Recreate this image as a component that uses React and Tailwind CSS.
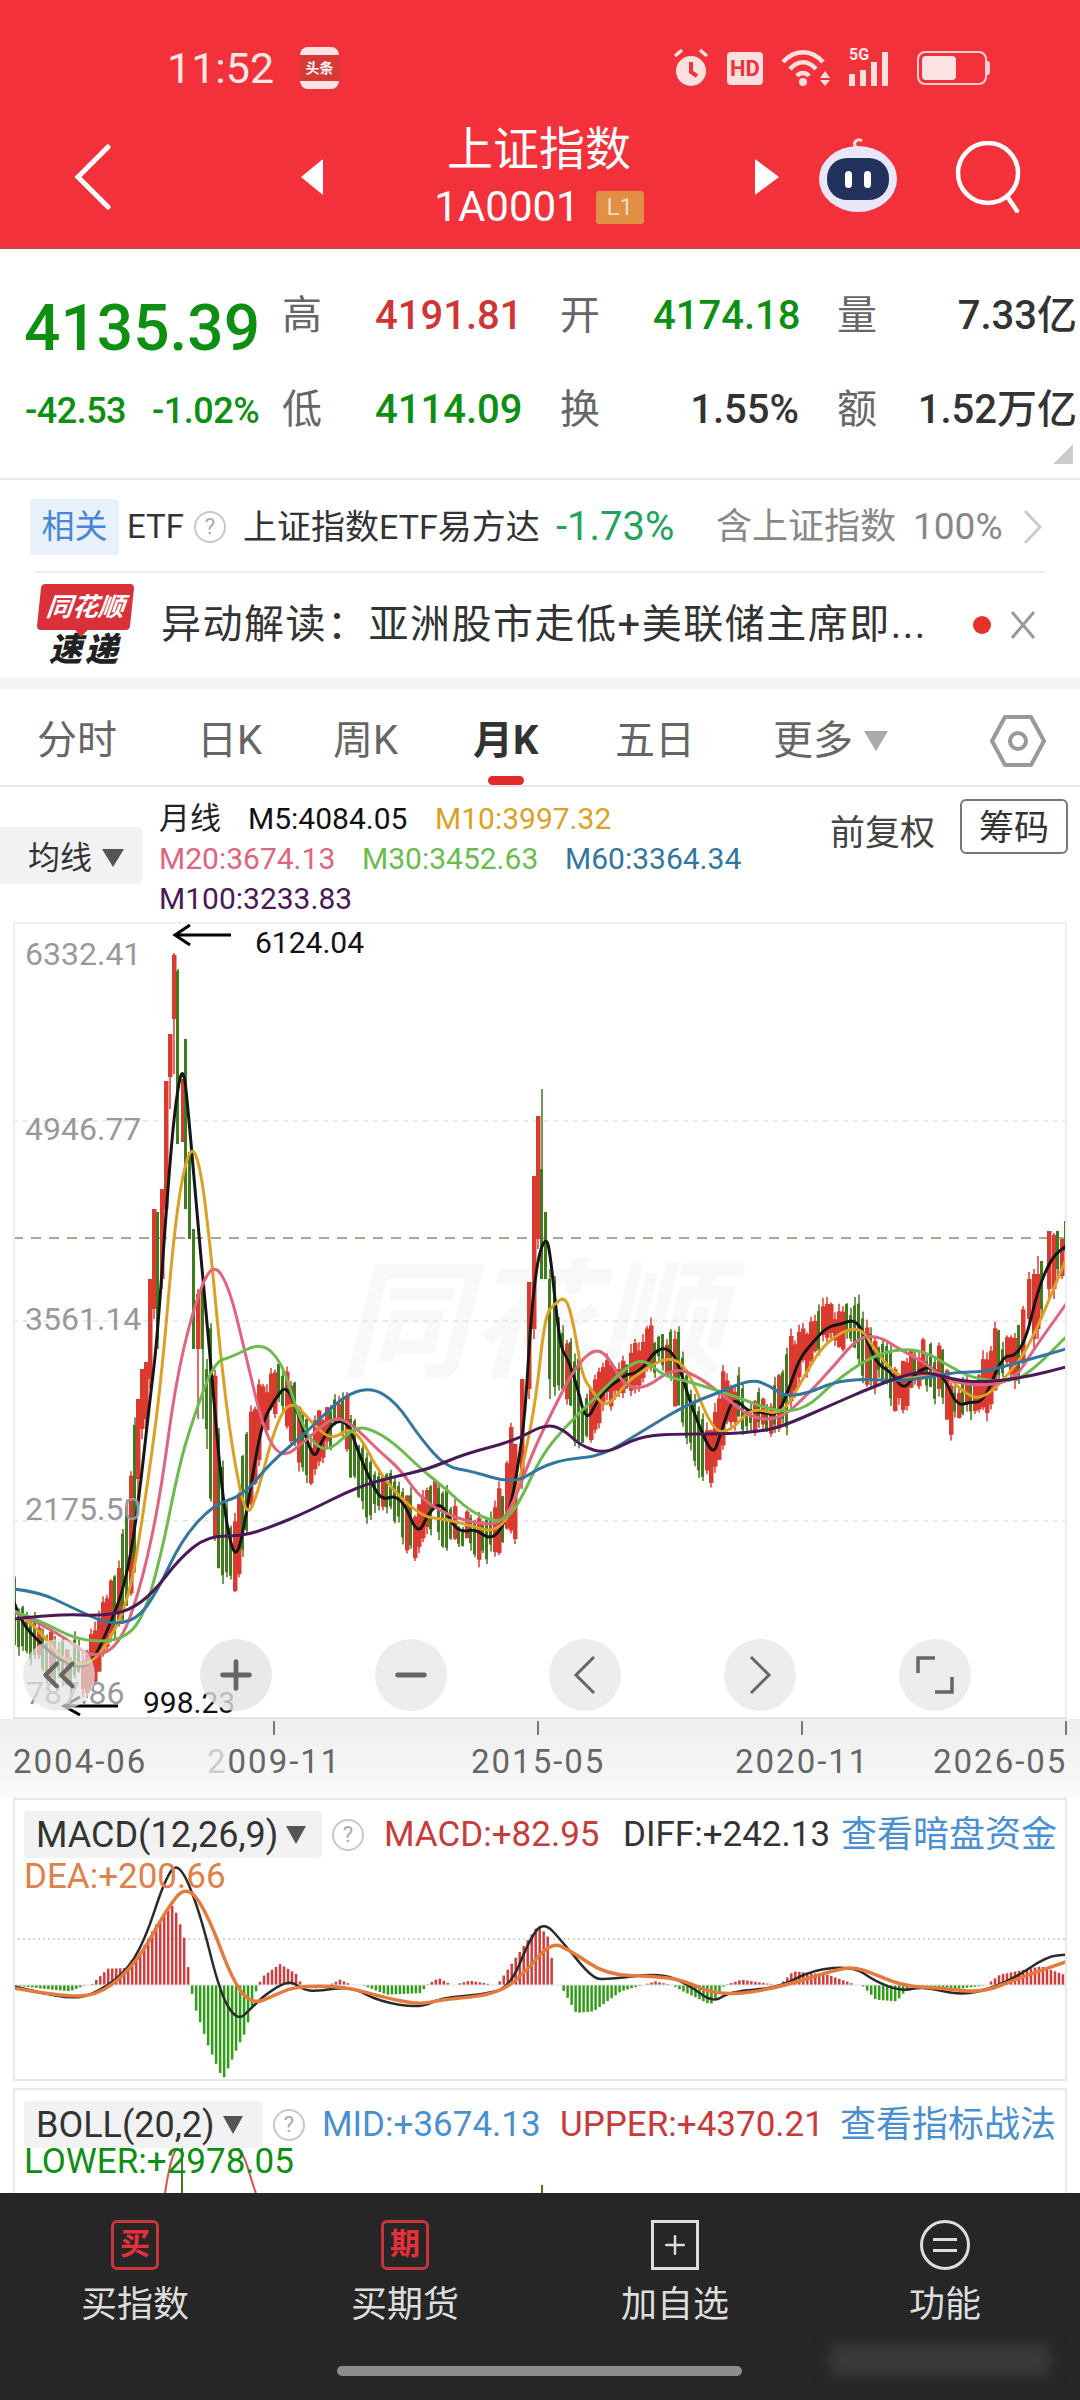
import React from 'react';
import { ChevronsLeft, Plus, Minus } from 'lucide-react';

const RED = '#dd3a2f';
const GREEN = '#3f7a1f';

const M5 = [[14,1603],[21,1623],[39,1643],[61,1663],[89,1670],[107,1633],[125,1587],[137,1517],[150,1400],[157,1343],[168,1187],[175,1107],[183,1062],[189,1120],[196,1203],[205,1303],[214,1400],[221,1483],[229,1540],[237,1560],[246,1517],[257,1450],[264,1420],[275,1400],[287,1385],[300,1420],[314,1462],[321,1443],[334,1422],[348,1423],[357,1450],[371,1483],[379,1497],[386,1500],[393,1497],[404,1503],[418,1537],[429,1513],[441,1503],[454,1528],[464,1533],[475,1530],[489,1540],[500,1533],[511,1507],[518,1467],[525,1417],[531,1317],[538,1257],[546,1238],[550,1253],[556,1310],[561,1350],[568,1360],[577,1387],[586,1423],[597,1403],[606,1390],[616,1383],[627,1375],[634,1375],[645,1367],[654,1353],[666,1348],[677,1360],[688,1397],[699,1427],[713,1457],[720,1437],[731,1403],[738,1402],[749,1413],[763,1413],[777,1417],[788,1393],[799,1360],[813,1343],[827,1328],[841,1325],[856,1320],[868,1343],[877,1365],[891,1373],[904,1392],[916,1373],[931,1367],[945,1380],[957,1407],[970,1403],[984,1403],[1002,1357],[1016,1357],[1027,1337],[1038,1290],[1052,1258],[1066,1247]];
const M10 = [[14,1612],[36,1627],[61,1660],[86,1668],[107,1647],[129,1600],[143,1517],[161,1387],[175,1220],[189,1145],[200,1163],[211,1253],[220,1353],[232,1450],[246,1520],[257,1497],[275,1427],[291,1400],[311,1423],[332,1442],[354,1425],[382,1480],[421,1518],[446,1520],[475,1528],[493,1533],[511,1517],[525,1457],[536,1400],[545,1317],[554,1305],[566,1297],[574,1327],[582,1377],[593,1393],[606,1410],[627,1383],[645,1370],[670,1357],[688,1370],[713,1433],[731,1432],[752,1408],[781,1417],[799,1387],[824,1343],[859,1325],[874,1350],[899,1380],[924,1378],[945,1373],[959,1390],[982,1403],[1016,1367],[1034,1337],[1066,1260]];
const M20 = [[14,1613],[36,1623],[64,1638],[93,1660],[121,1645],[143,1580],[161,1493],[175,1387],[193,1310],[212,1262],[229,1287],[246,1357],[264,1433],[282,1460],[304,1443],[332,1418],[350,1423],[379,1452],[400,1470],[421,1500],[450,1517],[479,1525],[500,1525],[514,1503],[534,1450],[552,1413],[574,1370],[593,1350],[607,1355],[624,1387],[645,1390],[674,1368],[699,1378],[724,1397],[752,1420],[781,1420],[806,1397],[834,1367],[859,1337],[881,1338],[899,1350],[924,1363],[945,1380],[974,1387],[1013,1383],[1034,1350],[1066,1305]];
const M30 = [[14,1612],[43,1623],[79,1642],[121,1642],[143,1620],[161,1557],[179,1467],[193,1420],[214,1363],[232,1358],[261,1343],[282,1363],[296,1410],[311,1443],[329,1453],[354,1428],[371,1430],[393,1443],[421,1470],[446,1490],[471,1513],[500,1525],[518,1507],[541,1457],[566,1427],[591,1403],[627,1367],[645,1360],[663,1377],[691,1383],[734,1397],[777,1413],[806,1410],[834,1383],[870,1358],[899,1350],[924,1352],[949,1367],[974,1380],[1013,1383],[1034,1370],[1066,1338]];
const M60 = [[14,1590],[39,1593],[71,1608],[107,1625],[136,1622],[157,1593],[182,1540],[214,1505],[243,1497],[271,1463],[307,1433],[343,1397],[371,1388],[396,1403],[421,1440],[446,1468],[471,1472],[514,1485],[541,1468],[566,1460],[602,1457],[641,1433],[684,1407],[720,1393],[752,1380],[770,1387],[784,1397],[806,1395],[834,1383],[863,1380],[899,1382],[931,1378],[956,1373],[984,1373],[1020,1363],[1066,1350]];
const M100 = [[14,1620],[61,1615],[100,1617],[129,1612],[154,1593],[179,1560],[207,1537],[243,1537],[271,1528],[307,1513],[357,1488],[393,1478],[429,1470],[464,1455],[514,1442],[545,1425],[563,1430],[581,1447],[606,1455],[638,1438],[670,1435],[720,1435],[756,1433],[781,1428],[827,1408],[863,1392],[899,1378],[924,1372],[959,1382],[988,1383],[1027,1378],[1066,1368]];

const DIFF = [[20,625],[60,645],[100,660],[130,655],[180,590],[210,490],[240,300],[260,250],[290,400],[320,650],[345,730],[365,690],[385,650],[420,605],[440,635],[460,640],[510,625],[550,670],[610,690],[640,660],[700,650],[740,630],[770,480],[790,430],[820,500],[860,600],[880,605],[960,585],[1000,620],[1035,675],[1060,640],[1130,630],[1180,575],[1240,565],[1270,610],[1310,640],[1340,625],[1390,650],[1425,640],[1470,605],[1520,535],[1550,530]];
const DEA = [[20,630],[100,660],[150,645],[200,550],[240,400],[270,320],[300,400],[340,620],[368,680],[400,650],[430,625],[500,625],[560,660],[610,680],[640,665],[720,650],[760,590],[800,490],[830,520],[880,590],[950,595],[990,605],[1045,655],[1130,630],[1220,570],[1250,570],[1310,625],[1370,630],[1425,645],[1480,600],[1550,550]];
const HIST = [[20,622],[60,632],[100,640],[122,622],[130,622],[155,572],[185,570],[200,530],[225,440],[250,380],[265,470],[275,622],[280,680],[300,800],[322,905],[345,800],[355,760],[370,640],[373,622],[380,595],[405,558],[430,590],[436,622],[455,632],[475,622],[492,605],[510,622],[525,622],[560,650],[610,645],[617,622],[635,600],[655,622],[680,608],[720,622],[750,530],[780,440],[795,480],[805,622],[812,622],[835,705],[860,700],[900,640],[930,622],[950,610],[975,622],[990,640],[1030,680],[1050,622],[1075,605],[1130,622],[1150,580],[1200,590],[1240,620],[1250,622],[1270,665],[1300,670],[1320,622],[1380,635],[1430,622],[1450,590],[1510,565],[1550,595]];

// hand read candles around the two spikes and the right edge: x, top, bottom, wickTop, wickBottom
const SPIKE_CANDLES = [
  [138,1400,1480,1400,1500,RED],[142,1370,1430,1370,1440,RED],[146,1363,1420,1363,1430,RED],[150,1280,1380,1280,1390,RED],
  [154,1210,1310,1210,1320,RED],[158,1213,1340,1213,1350,GREEN],[162,1190,1280,1190,1290,RED],[166,1082,1210,1082,1220,RED],
  [170,1035,1078,1035,1110,RED],[174,956,1020,954,1075,RED],[178,972,1145,970,1145,GREEN],[183,1080,1143,1080,1143,RED],
  [186,1040,1210,1040,1210,GREEN],[190,1153,1240,1153,1240,GREEN],[194,1230,1350,1230,1350,GREEN],[198,1295,1350,1290,1420,RED],
  [203,1287,1350,1287,1420,GREEN],[207,1370,1430,1360,1450,GREEN],
  [515,1445,1540,1445,1545,RED],[522,1380,1480,1380,1490,RED],[529,1283,1390,1283,1400,RED],[534,1177,1330,1177,1340,RED],
  [538,1117,1240,1117,1250,RED],[542,1170,1280,1090,1280,GREEN],[546,1213,1280,1213,1280,GREEN],[550,1280,1380,1270,1400,GREEN],
  [1029,1280,1320,1273,1330,RED],[1034,1275,1340,1270,1350,RED],[1038,1275,1330,1257,1340,RED],[1042,1262,1310,1262,1320,GREEN],
  [1049,1232,1290,1232,1300,RED],[1054,1236,1290,1234,1300,RED],[1058,1232,1270,1232,1280,GREEN],[1062,1240,1277,1240,1280,RED],
  [1066,1222,1252,1222,1252,GREEN],
];

const lerp = (pts, x) => {
  if (x <= pts[0][0]) return pts[0][1];
  for (let i = 1; i < pts.length; i++) {
    if (x <= pts[i][0]) {
      const [x0, y0] = pts[i - 1];
      const [x1, y1] = pts[i];
      return y0 + ((y1 - y0) * (x - x0)) / (x1 - x0);
    }
  }
  return pts[pts.length - 1][1];
};

const noise = (i) => {
  const v = Math.sin(i * 12.9898) * 43758.5453;
  return v - Math.floor(v);
};

const smooth = (pts) => {
  let d = `M${pts[0][0]} ${pts[0][1]}`;
  for (let i = 1; i < pts.length - 1; i++) {
    const mx = (pts[i][0] + pts[i + 1][0]) / 2;
    const my = (pts[i][1] + pts[i + 1][1]) / 2;
    d += ` Q${pts[i][0]} ${pts[i][1]} ${mx} ${my}`;
  }
  const last = pts[pts.length - 1];
  return `${d} L${last[0]} ${last[1]}`;
};

const buildCandles = () => {
  const out = [];
  let i = 0;
  for (let x = 15; x <= 1064; x += 4) {
    i++;
    const inSpike = (x >= 136 && x <= 209) || (x >= 513 && x <= 552) || x >= 1027;
    if (inSpike) continue;
    const c = lerp(M5, x + 4);
    const slope = lerp(M5, x + 7) - lerp(M5, x + 1);
    const h = 6 + Math.abs(slope) * 1.1 + noise(i) * 11;
    const mid = c + (noise(i + 300) - 0.55) * 20;
    const up = noise(i + 600) < (slope < 0 ? 0.8 : 0.28);
    out.push([x, mid - h, mid + h, mid - h - noise(i + 900) * 9, mid + h + noise(i + 1200) * 9, up ? RED : GREEN]);
  }
  return out.concat(SPIKE_CANDLES);
};

const CANDLES = buildCandles();

const buildBars = () => {
  const bars = [];
  for (let zx = 22; zx <= 1550; zx += 5.8) {
    const y = 1780 + lerp(HIST, zx) / 3;
    const x = zx / 1.452;
    if (Math.abs(y - 1987) < 0.6) continue;
    bars.push({ x, y: Math.min(y, 1987), h: Math.abs(y - 1987), up: y < 1987 });
  }
  return bars;
};

const scaleMacd = (pts) => pts.map(([x, y]) => [x / 1.452, 1780 + y / 3]);

const Line = ({ pts, color, width = 3 }) => (
  <path d={smooth(pts)} fill="none" stroke={color} strokeWidth={width} strokeLinejoin="round" strokeLinecap="round" />
);

const StatusBar = () => (
  <div className="flex items-center h-[68px] mt-[34px] pl-[167px] pr-[90px] text-[#fbe6e6]">
    <span className="text-[43px] leading-none w-[133px]">11:52</span>
    <div className="w-[39px] h-[42px] rounded-[8px] bg-[#fde4e2] flex items-center justify-center overflow-hidden relative">
      <div className="w-full h-[26px] bg-[#d63a36] text-[#fff] text-[14px] leading-[26px] text-center font-bold">头条</div>
    </div>
    <div className="flex-1" />
    <svg width="36" height="42" viewBox="0 0 36 42" className="mr-[18px]">
      <circle cx="18" cy="24" r="15" fill="#fbe0e0" />
      <path d="M18 15v10l6 4" stroke="#f2313b" strokeWidth="4" fill="none" />
      <path d="M2 9l7-6M34 9l-7-6" stroke="#fbe0e0" strokeWidth="3.5" />
    </svg>
    <div className="w-[36px] h-[33px] rounded-[4px] bg-[#fbe0e0] text-[#f2313b] text-[22px] leading-[33px] text-center font-bold mr-[18px]">HD</div>
    <svg width="52" height="38" viewBox="0 0 52 38" className="mr-[16px]">
      <path d="M2 13C14 0 30 0 42 13M9 20C17 11 27 11 35 20M16 27C19 23 25 23 28 27" stroke="#fbe0e0" strokeWidth="4.5" fill="none" />
      <circle cx="22" cy="33" r="4" fill="#fbe0e0" />
      <path d="M44 22l5 7h-10zM44 37l5-6h-10z" fill="#fbe0e0" />
    </svg>
    <div className="relative w-[52px] h-[36px] mr-[16px]">
      <span className="absolute -top-[3px] left-0 text-[16px] leading-none font-bold">5G</span>
      <div className="absolute bottom-0 left-0 flex items-end gap-[5px]">
        <div className="w-[6px] h-[12px] bg-[#fbe0e0]" />
        <div className="w-[6px] h-[16px] bg-[#fbe0e0]" />
        <div className="w-[6px] h-[24px] bg-[#fbe0e0]" />
        <div className="w-[6px] h-[34px] bg-[#fbe0e0]" />
      </div>
    </div>
    <div className="flex items-center">
      <div className="w-[70px] h-[34px] rounded-[8px] border-2 border-[#fbd0d0] p-[3px]">
        <div className="w-[34px] h-full rounded-[4px] bg-[#fde4e2]" />
      </div>
      <div className="w-[3px] h-[14px] bg-[#fbd0d0] rounded-r" />
    </div>
  </div>
);

const NavBar = () => (
  <div className="flex items-center h-[135px] mt-[7px] relative">
    <svg width="40" height="66" viewBox="0 0 40 66" className="ml-[73px]">
      <path d="M35 3L5 33l30 30" fill="none" stroke="#fff" strokeWidth="5" strokeLinecap="round" />
    </svg>
    <div className="ml-[188px] w-0 h-0 border-y-[18px] border-y-transparent border-r-[22px] border-r-white" />
    <div className="w-[432px] flex flex-col items-center text-white">
      <div className="text-[46px] leading-[56px] -mt-[5px]">上证指数</div>
      <div className="flex items-center gap-[16px] leading-none mt-[10px]">
        <span className="text-[42px] leading-[40px]">1A0001</span>
        <span className="w-[48px] h-[33px] rounded-[3px] bg-[#e08f45] text-[#f7dcc0] text-[24px] leading-[33px] text-center">L1</span>
      </div>
    </div>
    <div className="w-0 h-0 border-y-[18px] border-y-transparent border-l-[24px] border-l-white" />
    <svg width="84" height="80" viewBox="0 0 84 80" className="ml-[37px]">
      <path d="M40 10c-4-5 2-9 6-6" fill="none" stroke="#fbe0e0" strokeWidth="3" />
      <ellipse cx="42" cy="42" rx="39" ry="33" fill="#e9e6f8" />
      <rect x="11" y="21" width="62" height="42" rx="20" fill="#23325c" />
      <rect x="29" y="34" width="7" height="17" rx="3.5" fill="#fff" />
      <rect x="48" y="34" width="7" height="17" rx="3.5" fill="#fff" />
    </svg>
    <svg width="72" height="72" viewBox="0 0 72 72" className="ml-[54px]">
      <circle cx="34" cy="32" r="30" fill="none" stroke="#fff" strokeWidth="4.5" />
      <path d="M53 55l10 15" stroke="#fff" strokeWidth="4.5" strokeLinecap="round" />
    </svg>
  </div>
);

const Cell = ({ label, value, color, right, w, lw = 'w-[93px]' }) => (
  <>
    <span className={`${lw} shrink-0 text-[40px] text-[#666] leading-none`}>{label}</span>
    <span className={`${w} shrink-0 text-[40px] font-medium leading-none whitespace-nowrap ${right ? 'text-right' : ''}`} style={{ color }}>{value}</span>
  </>
);

const Quote = () => (
  <div className="relative h-[231px] border-b-2 border-[#e8e8e8] pt-[24px] flex">
    <div className="w-[282px] shrink-0">
      <div className="h-[108px] pl-[24px] pt-[18px] text-[64px] leading-[76px] font-medium text-[#0d8f12]">4135.39</div>
      <div className="flex items-center h-[60px] pl-[25px] gap-[26px] text-[36px] text-[#0d8f12] font-medium whitespace-nowrap tracking-[-0.5px]">
        <span>-42.53</span>
        <span>-1.02%</span>
      </div>
    </div>
    <div className="flex-1 flex flex-col gap-[14px] pt-[3px]">
      <div className="flex items-center h-[80px]">
        <Cell label="高" value="4191.81" color="#cf3535" w="w-[185px]" />
        <Cell label="开" value="4174.18" color="#0d8f12" w="w-[146px]" />
        <span className="w-[38px]" />
        <Cell label="量" value="7.33亿" color="#333" right lw="w-[60px]" w="w-[180px]" />
      </div>
      <div className="flex items-center h-[80px]">
        <Cell label="低" value="4114.09" color="#0d8f12" w="w-[185px]" />
        <Cell label="换" value="1.55%" color="#333" right w="w-[146px]" />
        <span className="w-[38px]" />
        <Cell label="额" value="1.52万亿" color="#333" right lw="w-[60px]" w="w-[180px]" />
      </div>
    </div>
    <div className="absolute right-[7px] bottom-[14px] w-0 h-0 border-b-[20px] border-b-[#ccc] border-l-[20px] border-l-transparent" />
  </div>
);

const QuestionDot = ({ className }) => (
  <span className={`${className} shrink-0 w-[32px] h-[32px] rounded-full border-2 border-[#c8c8c8] text-[#aaa] text-[22px] leading-[28px] text-center`}>?</span>
);

const EtfRow = () => (
  <div className="h-[91px] flex items-center pl-[30px] pt-[3px] whitespace-nowrap">
    <span className="w-[89px] h-[56px] rounded-[4px] bg-[#e8f0fb] text-[#4a86d8] text-[33px] leading-[56px] text-center">相关</span>
    <span className="ml-[8px] text-[33px] text-[#333]">ETF</span>
    <QuestionDot className="ml-[10px]" />
    <span className="ml-[17px] text-[34px] text-[#333] w-[313px]">上证指数ETF易方达</span>
    <span className="text-[40px] text-[#22a45d] w-[160px]">-1.73%</span>
    <span className="text-[36px] text-[#888] w-[197px]">含上证指数</span>
    <span className="text-[37px] text-[#888] w-[110px]">100%</span>
    <svg width="20" height="36" viewBox="0 0 20 36">
      <path d="M2 2l15 16L2 34" fill="none" stroke="#ccc" strokeWidth="3" />
    </svg>
  </div>
);

const NewsRow = () => (
  <div className="mx-[35px] h-[106px] border-t-2 border-[#eee] flex items-center">
    <div className="w-[100px] shrink-0 flex flex-col items-center">
      <div className="relative w-[93px] h-[46px] rounded-[4px] bg-[#d9303a] -skew-x-6 text-white text-[26px] leading-[46px] text-center font-bold italic">
        同花顺
        <div className="absolute left-[38px] -bottom-[7px] w-0 h-0 border-x-[7px] border-x-transparent border-t-[8px] border-t-[#d9303a]" />
      </div>
      <div className="text-[33px] leading-[34px] font-black italic text-[#222] mt-[3px] tracking-[3px]">速递</div>
    </div>
    <div className="ml-[26px] w-[772px] shrink-0 text-[40px] text-[#333] whitespace-nowrap overflow-hidden tracking-[1.5px]">异动解读：亚洲股市走低+美联储主席即...</div>
    <div className="ml-[40px] w-[18px] h-[18px] rounded-full bg-[#e5302c]" />
    <svg width="26" height="30" viewBox="0 0 26 30" className="ml-[19px]">
      <path d="M2 2l22 26M24 2L2 28" stroke="#999" strokeWidth="3" />
    </svg>
  </div>
);

const Tabs = () => (
  <div className="relative h-[98px] border-b-2 border-[#e6e6e6] pt-[7px] text-[40px] text-[#666] leading-none whitespace-nowrap flex items-center">
    <span className="ml-[37px] w-[160px]">分时</span>
    <span className="w-[136px]">日K</span>
    <span className="w-[140px]">周K</span>
    <span className="w-[142px] font-bold text-[#333]">月K</span>
    <span className="w-[158px]">五日</span>
    <span className="w-[91px]">更多</span>
    <div className="w-0 h-0 border-x-[12px] border-x-transparent border-t-[20px] border-t-[#aaa]" />
    <svg width="56" height="54" viewBox="0 0 56 54" className="ml-[102px]">
      <path d="M15 3h26l13 24-13 24H15L2 27z" fill="none" stroke="#999" strokeWidth="4" strokeLinejoin="round" />
      <circle cx="28" cy="27" r="8" fill="none" stroke="#999" strokeWidth="4" />
    </svg>
    <div className="absolute left-[488px] bottom-0 w-[36px] h-[9px] rounded-full bg-[#e22c2c]" />
  </div>
);

const Legend = () => (
  <div className="relative h-[135px] flex text-[30px] leading-[40px] whitespace-nowrap">
    <div className="w-[143px] h-[57px] mt-[40px] bg-[#f2f2f2] rounded-r-[6px] flex items-center pl-[28px] pt-[4px] text-[32px] text-[#333]">
      均线
      <div className="ml-[10px] w-0 h-0 border-x-[11px] border-x-transparent border-t-[18px] border-t-[#555]" />
    </div>
    <div className="ml-[16px] pt-[12px]">
      <div className="flex">
        <span className="text-[31px] text-[#222] w-[89px]">月线</span>
        <span className="text-[#111] w-[187px]">M5:4084.05</span>
        <span className="text-[#dca124]">M10:3997.32</span>
      </div>
      <div className="flex">
        <span className="text-[#e0647e] w-[203px]">M20:3674.13</span>
        <span className="text-[#6cbb4e] w-[203px]">M30:3452.63</span>
        <span className="text-[#33769f]">M60:3364.34</span>
      </div>
      <div className="text-[#4b1859]">M100:3233.83</div>
    </div>
    <span className="absolute left-[830px] top-[27px] text-[35px] leading-[40px] text-[#444]">前复权</span>
    <span className="absolute left-[960px] top-[12px] w-[108px] h-[55px] rounded-[6px] border-2 border-[#777] text-[35px] leading-[55px] text-center text-[#333]">筹码</span>
  </div>
);

const AXIS = [
  ['6332.41', 955, 25],
  ['4946.77', 1130, 25],
  ['3561.14', 1320, 25],
  ['2175.50', 1510, 25],
  ['787.86', 1694, 26],
];

const Circle = ({ left, tint, children }) => (
  <div className={`absolute top-[715px] w-[72px] h-[72px] rounded-full flex items-center justify-center text-[#666] ${tint}`} style={{ left }}>
    {children}
  </div>
);

const KChart = () => (
  <div className="relative ml-[13px] w-[1054px] h-[797px] border-2 border-[#eee] border-b-[#e4e4e4] overflow-hidden">
    <div className="absolute left-[325px] top-[335px] text-[128px] leading-none font-bold italic text-[#f8f8f8] whitespace-nowrap">同花顺</div>
    <svg className="absolute -left-[2px] -top-[2px]" width="1054" height="797" viewBox="13 923 1054 797">
      <path d="M13 1122H1067M13 1322H1067M13 1522H1067" stroke="#e4e4e4" strokeWidth="1.5" strokeDasharray="5 5" />
      <path d="M13 1239H1067" stroke="#b5a68e" strokeWidth="2" strokeDasharray="10 8" />
      {CANDLES.map(([x, t, b, wt, wb, color], i) => (
        <g key={i}>
          <rect x={x - 0.75} y={wt} width="1.5" height={wb - wt} fill={color} />
          <rect x={x - 2} y={t} width={color === RED ? 4.5 : 3} height={b - t} fill={color} />
        </g>
      ))}
      <Line pts={M5} color="#161616" />
      <Line pts={M10} color="#dca124" />
      <Line pts={M20} color="#e0647e" />
      <Line pts={M30} color="#6cbb4e" />
      <Line pts={M60} color="#33769f" />
      <Line pts={M100} color="#4b1859" />
      <path d="M231 936H175M190 926l-15 10 15 10" fill="none" stroke="#000" strokeWidth="3" />
      <path d="M118 1707H64M80 1698l-16 9 16 9" fill="none" stroke="#000" strokeWidth="3" />
    </svg>
    {AXIS.map(([label, y, x]) => (
      <span key={label} className="absolute text-[32px] leading-[40px] text-[#999]" style={{ left: x - 15, top: y - 945 }}>
        {label}
      </span>
    ))}
    <span className="absolute left-[240px] top-[1px] text-[30px] leading-[36px] text-[#111]">6124.04</span>
    <span className="absolute left-[128px] top-[761px] text-[30px] leading-[36px] text-[#111]">998.23</span>
    <Circle left={8} tint="bg-[#e2e2e2]/70"><ChevronsLeft size={54} strokeWidth={2} /></Circle>
    <Circle left={185} tint="bg-[#e4e4e4]/80"><Plus size={46} strokeWidth={2.5} /></Circle>
    <Circle left={360} tint="bg-[#ededed]"><Minus size={46} strokeWidth={2.5} /></Circle>
    <Circle left={534} tint="bg-[#ededed]">
      <svg width="24" height="40" viewBox="0 0 24 40">
        <path d="M21 2L3 20l18 18" fill="none" stroke="#666" strokeWidth="3" />
      </svg>
    </Circle>
    <Circle left={709} tint="bg-[#ededed]">
      <svg width="24" height="40" viewBox="0 0 24 40">
        <path d="M3 2l18 18L3 38" fill="none" stroke="#666" strokeWidth="3" />
      </svg>
    </Circle>
    <Circle left={884} tint="bg-[#ededed]">
      <svg width="40" height="40" viewBox="0 0 40 40">
        <path d="M3 18V3h17M37 22v15H20" fill="none" stroke="#666" strokeWidth="3.5" />
      </svg>
    </Circle>
  </div>
);

const DateAxis = () => (
  <div className="relative h-[79px] bg-linear-to-b from-[#eeeeee] to-[#fafafa] text-[33px] tracking-[2px] leading-none text-[#666] whitespace-nowrap">
    <span className="absolute left-[13px] top-[26px]">2004-06</span>
    <span className="absolute left-[207px] top-[26px]"><span className="text-[#ccc]">2</span>009-11</span>
    <span className="absolute left-[471px] top-[26px]">2015-05</span>
    <span className="absolute left-[735px] top-[26px]">2020-11</span>
    <span className="absolute left-[933px] top-[26px]">2026-05</span>
    <div className="absolute left-[273px] top-[2px] w-[2px] h-[14px] bg-[#777]" />
    <div className="absolute left-[537px] top-[2px] w-[2px] h-[14px] bg-[#777]" />
    <div className="absolute left-[801px] top-[2px] w-[2px] h-[14px] bg-[#777]" />
    <div className="absolute left-[1065px] top-[2px] w-[2px] h-[14px] bg-[#777]" />
  </div>
);

const Macd = () => (
  <div className="relative ml-[13px] w-[1054px] h-[283px] border-2 border-[#e8e8e8] overflow-hidden">
    <svg className="absolute -left-[2px] -top-[2px]" width="1054" height="283" viewBox="13 1800 1054 283">
      <path d="M13 1941H1067" stroke="#ccc" strokeWidth="1.5" strokeDasharray="2 3" />
      {buildBars().map((b, i) => (
        <rect key={i} x={b.x} y={b.y} width="2.5" height={b.h} fill={b.up ? '#d13b3b' : '#2e9e14'} />
      ))}
      <path d="M13 1987H1067" stroke="#ddd" strokeWidth="1" />
      <Line pts={scaleMacd(DIFF)} color="#2b2b2b" width={2.5} />
      <Line pts={scaleMacd(DEA)} color="#e57a3c" width={3.5} />
    </svg>
    <div className="relative flex items-center h-[47px] mt-[11px] text-[35px] leading-none whitespace-nowrap">
      <div className="ml-[9px] w-[298px] h-[47px] rounded-[4px] bg-[#f2f2f2] flex items-center pl-[12px] text-[36px] text-[#333]">
        MACD(12,26,9)
        <div className="ml-[8px] w-0 h-0 border-x-[10px] border-x-transparent border-t-[18px] border-t-[#555]" />
      </div>
      <QuestionDot className="ml-[10px]" />
      <span className="ml-[20px] text-[#c93a3a] w-[239px]">MACD:+82.95</span>
      <span className="text-[#333] w-[218px]">DIFF:+242.13</span>
      <span className="text-[36px] text-[#4a90d0]">查看暗盘资金</span>
    </div>
    <div className="relative ml-[9px] text-[35px] leading-[38px] text-[#e0804a]">DEA:+200.66</div>
  </div>
);

const Boll = () => (
  <div className="relative ml-[13px] mt-[7px] w-[1054px] h-[105px] border-t-2 border-x-2 border-[#e8e8e8] overflow-hidden">
    <svg className="absolute -left-[2px] -top-[2px]" width="1054" height="105" viewBox="13 2088 1054 105">
      <path d="M165 2193C170 2160 175 2145 183 2142C190 2140 195 2146 200 2146C210 2148 222 2146 234 2145C246 2150 250 2180 256 2193" fill="none" stroke="#d9504f" strokeWidth="2" />
      <path d="M182 2140V2193" stroke={GREEN} strokeWidth="2" />
      <path d="M542 2185V2193" stroke={GREEN} strokeWidth="2" />
    </svg>
    <div className="relative flex items-center h-[47px] mt-[11px] text-[35px] leading-none whitespace-nowrap">
      <div className="ml-[9px] w-[239px] h-[47px] rounded-[4px] bg-[#f2f2f2] flex items-center pl-[12px] text-[36px] text-[#333]">
        BOLL(20,2)
        <div className="ml-[8px] w-0 h-0 border-x-[10px] border-x-transparent border-t-[18px] border-t-[#555]" />
      </div>
      <QuestionDot className="ml-[10px]" />
      <span className="ml-[17px] text-[#4a90d0] w-[238px]">MID:+3674.13</span>
      <span className="text-[#c93a3a] w-[280px]">UPPER:+4370.21</span>
      <span className="text-[36px] text-[#4a90d0]">查看指标战法</span>
    </div>
    <div className="relative ml-[9px] -mt-[5px] text-[35px] leading-[38px] text-[#0d8f12]">LOWER:+2978.05</div>
  </div>
);

const Footer = () => (
  <div className="relative h-[207px] bg-[#262626] text-[36px] text-[#ddd] grid grid-cols-4 pt-[27px]">
    <div className="flex flex-col items-center">
      <div className="w-[48px] h-[50px] rounded-[6px] border-[3px] border-[#c8353a] text-[#e6303a] text-[30px] leading-[42px] text-center font-bold">买</div>
      <span className="mt-[12px] leading-[46px]">买指数</span>
    </div>
    <div className="flex flex-col items-center">
      <div className="w-[48px] h-[50px] rounded-[6px] border-[3px] border-[#c8353a] text-[#e6303a] text-[30px] leading-[42px] text-center font-bold">期</div>
      <span className="mt-[12px] leading-[46px]">买期货</span>
    </div>
    <div className="flex flex-col items-center">
      <div className="w-[48px] h-[50px] border-[3px] border-[#ddd] flex items-center justify-center">
        <Plus size={30} strokeWidth={2} />
      </div>
      <span className="mt-[12px] leading-[46px]">加自选</span>
    </div>
    <div className="flex flex-col items-center">
      <div className="w-[50px] h-[50px] rounded-full border-[3px] border-[#ddd] flex flex-col items-center justify-center gap-[8px]">
        <div className="w-[24px] h-[3px] bg-[#ddd]" />
        <div className="w-[24px] h-[3px] bg-[#ddd]" />
      </div>
      <span className="mt-[12px] leading-[46px]">功能</span>
    </div>
    <div className="absolute left-[337px] top-[173px] w-[405px] h-[10px] rounded-full bg-[#8d8d8d]" />
    <div className="absolute left-[830px] top-[152px] w-[220px] h-[30px] bg-[#3c3c3c] blur-sm" />
  </div>
);

export default function App() {
  return (
    <div className="w-[1080px] h-[2400px] bg-white overflow-hidden font-['Roboto','Noto_Sans_CJK_SC',sans-serif]">
      <div className="h-[249px] bg-[#f2313b] border-b-2 border-[#cf4040] overflow-hidden">
        <StatusBar />
        <NavBar />
      </div>
      <Quote />
      <EtfRow />
      <NewsRow />
      <div className="h-[12px] bg-[#f5f5f5]" />
      <Tabs />
      <Legend />
      <KChart />
      <DateAxis />
      <Macd />
      <Boll />
      <Footer />
    </div>
  );
}
